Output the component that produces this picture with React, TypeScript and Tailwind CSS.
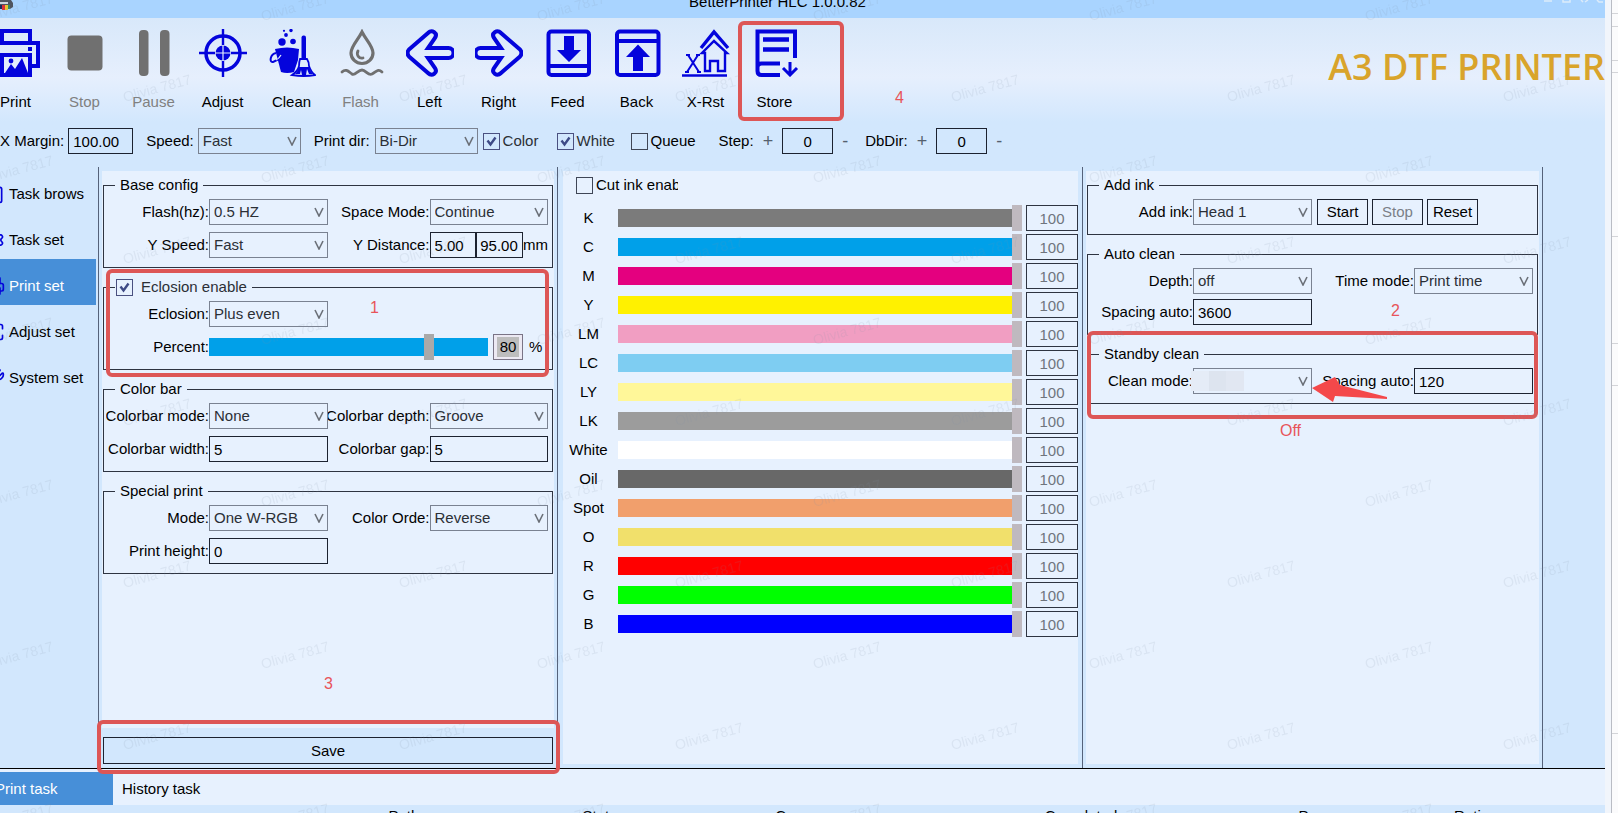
import type { ReactNode } from 'react';
import { Clipboard, Maximize, Printer, Settings, Wrench } from 'lucide-react';

const icons: Record<string, ReactNode> = {
  Print: (
    <g fill="none" stroke="currentColor" strokeWidth="4">
      <path d="M10 13V2h28v11M10 37H2V14h44v23h-8" />
      <rect x="10" y="26" width="28" height="20" />
      <path d="M36 20h4" />
      <path d="M13 44l6-9 4 5 7-11 6 15z" fill="currentColor" stroke="none" />
      <circle cx="19" cy="32" r="2.4" fill="currentColor" stroke="none" />
    </g>
  ),
  Stop: <rect x="6.5" y="6.5" width="35" height="35" rx="4" fill="currentColor" />,
  Pause: (
    <g fill="currentColor">
      <rect x="9" y="1" width="9.5" height="46" rx="4" />
      <rect x="30" y="1" width="9.5" height="46" rx="4" />
    </g>
  ),
  Adjust: (
    <g fill="none" stroke="currentColor">
      <circle cx="24" cy="24" r="17" strokeWidth="3.5" />
      <circle cx="24" cy="24" r="7.5" fill="currentColor" stroke="none" />
      <path d="M24 0v16M24 32v16M0 24h16M32 24h16" strokeWidth="2.4" />
      <path d="M24 16v16M16 24h16" stroke="#e5effd" strokeWidth="1.2" />
    </g>
  ),
  Clean: (
    <g fill="currentColor">
      <path d="M7 20q12-3 24 0l-1 11-4 12q-7 2-13 0z" />
      <path d="M8 24c-6 1-7 10-3 9 3-1 6-3 8-6" fill="none" stroke="currentColor" strokeWidth="2" />
      <path d="M8 31c2-1 4-3 5-5" fill="none" stroke="#e0edfc" strokeWidth="1.2" />
      <circle cx="14" cy="13" r="3.7" />
      <circle cx="25" cy="12.5" r="2.8" />
      <circle cx="18" cy="6" r="1.9" />
      <circle cx="16" cy="1.8" r="1.1" />
      <circle cx="23" cy="1.5" r="1.7" />
      <rect x="33.5" y="6.5" width="4.5" height="24" rx="2" />
      <path d="M32 30h7q2 3 2 7 2 6 6 9-11 2-23 0 6-4 7-9 0-4 1-7z" fill="#e0edfc" stroke="currentColor" strokeWidth="1.8" />
      <path d="M31 38q-1 4-4 7h5l1-4 1 5h4l1-6 2 5h4q-3-3-4-7z" />
    </g>
  ),
  Flash: (
    <g fill="none" stroke="currentColor" strokeLinecap="round">
      <path d="M25 3C21 11 14 17 14 24a11 10.5 0 0 0 22 0C36 17 29 11 25 3z" strokeWidth="3.2" />
      <path d="M21 22c-2 4 1 8 5 7" strokeWidth="2.8" />
      <path d="M5 43c4-4 7 0 10 2s6-4 10-4 6 6 10 4 6-6 10-2" strokeWidth="2.8" />
    </g>
  ),
  Left: (
    <path
      d="M3 20.5L22 4C26 0 32 4 29 9L22 19H42.5a5 5 0 0 1 0 10H22L29 39C32 44 26 48 22 44L3 27.5Q0 24 3 20.5z"
      fill="none"
      stroke="currentColor"
      strokeWidth="4"
    />
  ),
  Right: (
    <path
      d="M45 20.5L26 4C22 0 16 4 19 9L26 19H5.5a5 5 0 0 0 0 10H26L19 39C16 44 22 48 26 44L45 27.5Q48 24 45 20.5z"
      fill="none"
      stroke="currentColor"
      strokeWidth="4"
    />
  ),
  Feed: (
    <g fill="none" stroke="currentColor" strokeWidth="4">
      <rect x="4.5" y="2.5" width="40.5" height="43.5" rx="3" />
      <path d="M5 37h40" />
      <path d="M20 7h10v14h7L25 33 13 21h7z" fill="currentColor" stroke="none" />
    </g>
  ),
  Back: (
    <g fill="none" stroke="currentColor" strokeWidth="4">
      <rect x="4" y="2.5" width="41.5" height="43.5" rx="3" />
      <path d="M4 12h41" />
      <path d="M20 42h10V28h7L25 15.5 13 28h7z" fill="currentColor" stroke="none" />
    </g>
  ),
  'X-Rst': (
    <g fill="none" stroke="currentColor" strokeWidth="2.4">
      <path d="M0 46.5h45" />
      <path d="M6 26l11 17M16 26L5 43M4 26h4M14 26h4M3 43h4M15 43h4" strokeWidth="2" />
      <path d="M19 19L32 3l14 16" strokeWidth="3.4" />
      <path d="M23 42V24h-3l12-12 13 12h-2v18h-7V32h-8v10z" />
    </g>
  ),
  Store: (
    <g fill="none" stroke="currentColor" strokeWidth="4">
      <path d="M44 29V2.5H6.5V38q0-3.500 4-3.500H29M6.5 36v6q0 4 4 4H29" />
      <path d="M12 10.5h26M12 20.5h26" strokeWidth="4.5" />
      <path d="M39 33v13M32 39l7 7 7-7" strokeWidth="3" />
    </g>
  ),
};

const tools = [
  { name: 'Print' },
  { name: 'Stop', off: true },
  { name: 'Pause', off: true },
  { name: 'Adjust' },
  { name: 'Clean' },
  { name: 'Flash', off: true },
  { name: 'Left' },
  { name: 'Right' },
  { name: 'Feed' },
  { name: 'Back' },
  { name: 'X-Rst' },
  { name: 'Store' },
];

const sideItems = [
  { name: 'Task brows', Icon: Clipboard },
  { name: 'Task set', Icon: Settings },
  { name: 'Print set', Icon: Printer, active: true },
  { name: 'Adjust set', Icon: Maximize },
  { name: 'System set', Icon: Wrench },
];

const inks = [
  { name: 'K', track: '[&::-webkit-slider-runnable-track]:bg-[#7b7b7b]' },
  { name: 'C', track: '[&::-webkit-slider-runnable-track]:bg-[#00a0e9]' },
  { name: 'M', track: '[&::-webkit-slider-runnable-track]:bg-[#e4007f]' },
  { name: 'Y', track: '[&::-webkit-slider-runnable-track]:bg-[#fff100]' },
  { name: 'LM', track: '[&::-webkit-slider-runnable-track]:bg-[#f19ec2]' },
  { name: 'LC', track: '[&::-webkit-slider-runnable-track]:bg-[#7ecdf2]' },
  { name: 'LY', track: '[&::-webkit-slider-runnable-track]:bg-[#fff799]' },
  { name: 'LK', track: '[&::-webkit-slider-runnable-track]:bg-[#9c9c9c]' },
  { name: 'White', track: '[&::-webkit-slider-runnable-track]:bg-white' },
  { name: 'Oil', track: '[&::-webkit-slider-runnable-track]:bg-[#686868]' },
  { name: 'Spot', track: '[&::-webkit-slider-runnable-track]:bg-[#f19f6c]' },
  { name: 'O', track: '[&::-webkit-slider-runnable-track]:bg-[#f1e06b]' },
  { name: 'R', track: '[&::-webkit-slider-runnable-track]:bg-[#ff0000]' },
  { name: 'G', track: '[&::-webkit-slider-runnable-track]:bg-[#00ff00]' },
  { name: 'B', track: '[&::-webkit-slider-runnable-track]:bg-[#0000ff]' },
];

const sliderClass =
  'w-full min-w-0 appearance-none bg-transparent h-[26px] [&::-webkit-slider-runnable-track]:h-[18px] [&::-webkit-slider-thumb]:appearance-none [&::-webkit-slider-thumb]:h-[26px] [&::-webkit-slider-thumb]:w-[10px] [&::-webkit-slider-thumb]:-mt-1';

const boxClass = 'h-[26px] min-w-0 border border-[#1c2230] bg-transparent text-black';

const Select = ({ id, value }: { id: string; value: string }) => (
  <div className="relative w-full min-w-0">
    <select
      id={id}
      className="block h-[26px] w-full appearance-none border border-[#7a8291] bg-transparent pl-1 text-[#2b2f36]"
    >
      <option>{value}</option>
    </select>
    <svg viewBox="0 0 10 10" className="pointer-events-none absolute top-2 right-1 size-[10px]">
      <path d="M1 1l4 8 4-8" fill="none" stroke="#6b7078" strokeWidth="1.6" />
    </svg>
  </div>
);

const Check = ({ id, checked = false }: { id: string; checked?: boolean }) => (
  <span className="relative size-[17px] shrink-0">
    <input
      id={id}
      type="checkbox"
      defaultChecked={checked}
      className="peer block size-[17px] appearance-none border border-[#3f4656] checked:border-[#4a5080]"
    />
    <svg viewBox="0 0 17 17" className="pointer-events-none absolute inset-0 hidden peer-checked:block">
      <path d="M4.5 7.5l3 4 5-7" fill="none" stroke="#3e4a86" strokeWidth="2.4" />
    </svg>
  </span>
);

const FieldLabel = ({ id, text }: { id: string; text: string }) => (
  <label htmlFor={id} className="flex justify-end overflow-hidden whitespace-nowrap">
    {text}
  </label>
);

const SelectField = ({ id, label, value }: { id: string; label: string; value: string }) => (
  <>
    <FieldLabel id={id} text={label} />
    <Select id={id} value={value} />
  </>
);

const TextField = ({ id, label, value }: { id: string; label: string; value: string }) => (
  <>
    <FieldLabel id={id} text={label} />
    <input id={id} defaultValue={value} className={`${boxClass} w-full pl-1`} />
  </>
);

const Group = ({ title, children, tight = false }: { title: ReactNode; children: ReactNode; tight?: boolean }) => (
  <fieldset className="relative border border-[#2e3441]">
    <legend className="ml-[11px] flex h-5 items-center">{title}</legend>
    <div
      className={`grid grid-cols-[103px_minmax(0,1fr)_102px_minmax(0,1fr)] items-center pt-1 pr-1 pb-[9px] pl-0.5 ${
        tight ? 'gap-y-[5px]' : 'gap-y-[7px]'
      }`}
    >
      {children}
    </div>
  </fieldset>
);

const Title = ({ text }: { text: string }) => <span className="px-[5px]">{text}</span>;

const Stepper = ({ id, label }: { id: string; label: string }) => (
  <div className="flex items-center">
    <label htmlFor={id}>{label}</label>
    <button aria-label={`${label} up`} className="mx-[9px] text-lg text-[#55606e]">
      +
    </button>
    <input id={id} defaultValue="0" className={`${boxClass} w-[51px] text-center`} />
    <button aria-label={`${label} down`} className="ml-[9px] text-lg text-[#55606e]">
      -
    </button>
  </div>
);

const Mark = ({ className }: { className: string }) => (
  <div className={`pointer-events-none absolute z-10 rounded-md border-4 border-[#dd5656] ${className}`} />
);

const Note = ({ text, className }: { text: string; className: string }) => (
  <span className={`absolute z-10 text-base text-[#e8545a] ${className}`}>{text}</span>
);

const Toolbar = () => (
  <div className="relative bg-linear-to-b from-[#d8e8fa] from-0% via-[#e6effd] via-40% to-[#d2e7fd] to-70% pb-[13px]">
    <div className="flex items-start justify-between">
      <div className="-ml-[19px] flex pt-[11px]">
        {tools.map((tool) => (
          <button
            key={tool.name}
            disabled={tool.off}
            className={`relative flex w-[69px] flex-col items-center gap-[15px] ${
              tool.off ? 'text-[#707070]' : 'text-[#0404dc]'
            }`}
          >
            <svg viewBox="0 0 48 48" className="size-12">
              {icons[tool.name]}
            </svg>
            <span className={tool.off ? 'text-[#808080]' : 'text-black'}>{tool.name}</span>
            {tool.name === 'Store' && <Mark className="-top-2 -left-[2px] h-[100px] w-[106px]" />}
          </button>
        ))}
        <div className="relative">
          <Note text="4" className="top-[57px] left-[86px]" />
        </div>
      </div>
      <h1 className="pt-6 font-['Open_Sans',sans-serif] text-4xl leading-[50px] font-semibold whitespace-nowrap text-[#d9a42b]">
        A3 DTF PRINTER
      </h1>
    </div>
    <div className="mt-4 flex h-[26px] items-center gap-[13px] whitespace-nowrap">
      <div className="flex items-center gap-1">
        <label htmlFor="x-margin">X Margin:</label>
        <input id="x-margin" defaultValue="100.00" className={`${boxClass} w-[65px] pl-1`} />
      </div>
      <div className="flex items-center gap-1">
        <label htmlFor="speed">Speed:</label>
        <div className="w-[103px]">
          <Select id="speed" value="Fast" />
        </div>
      </div>
      <div className="flex items-center gap-[5px]">
        <label htmlFor="print-dir">Print dir:</label>
        <div className="w-[103px]">
          <Select id="print-dir" value="Bi-Dir" />
        </div>
      </div>
      <div className="-ml-2 flex">
        <label htmlFor="color" className="flex w-[74px] items-center gap-[3px] text-[#2b2f36]">
          <Check id="color" checked />
          Color
        </label>
        <label htmlFor="white" className="flex w-[74px] items-center gap-[3px] text-[#2b2f36]">
          <Check id="white" checked />
          White
        </label>
        <label htmlFor="queue" className="flex w-[75px] items-center gap-[3px]">
          <Check id="queue" />
          Queue
        </label>
      </div>
      <div className="flex gap-[17px]">
        <Stepper id="step" label="Step:" />
        <Stepper id="dbdir" label="DbDir:" />
      </div>
    </div>
  </div>
);

const PrintConfig = () => (
  <section className="relative flex min-w-0 flex-col border-l border-[#55627a] px-[3px] pt-1 pb-1">
    <div className="flex flex-1 flex-col gap-[9px] bg-[#e7f1fe] px-px pt-1">
      <Group title={<Title text="Base config" />}>
        <SelectField id="flash" label="Flash(hz):" value="0.5 HZ" />
        <SelectField id="space-mode" label="Space Mode:" value="Continue" />
        <SelectField id="y-speed" label="Y Speed:" value="Fast" />
        <FieldLabel id="y-distance" text="Y Distance:" />
        <div className="flex items-center">
          <input id="y-distance" defaultValue="5.00" className={`${boxClass} w-[47px] pl-1`} />
          <input aria-label="Y Distance end" defaultValue="95.00" className={`${boxClass} w-[47px] pl-[3px]`} />
          <span>mm</span>
        </div>
      </Group>
      <Group
        title={
          <label htmlFor="eclosion-enable" className="flex items-center gap-2 pr-[5px] pl-px text-[#2b2f36]">
            <Check id="eclosion-enable" checked />
            Eclosion enable
          </label>
        }
      >
        <SelectField id="eclosion" label="Eclosion:" value="Plus even" />
        <span className="col-span-2" />
        <FieldLabel id="percent" text="Percent:" />
        <div className="col-span-3 flex items-center">
          <input
            id="percent"
            type="range"
            defaultValue="80"
            className={`${sliderClass} [&::-webkit-slider-runnable-track]:bg-[#00a0e9] [&::-webkit-slider-thumb]:bg-[#a9a9a9]`}
          />
          <div className="ml-[5px] flex h-[26px] w-[30px] shrink-0 items-center justify-center border border-[#7a7486] bg-[#ece9f3]">
            <input aria-label="Percent value" defaultValue="80" className="w-[22px] bg-[#bdbdbd] text-center" />
          </div>
          <span className="w-[25px] shrink-0 pl-[6px]">%</span>
        </div>
        <Mark className="-top-7 right-[3px] -bottom-2 left-0.5" />
        <Note text="1" className="-top-px left-[266px]" />
      </Group>
      <Group title={<Title text="Color bar" />}>
        <SelectField id="bar-mode" label="Colorbar mode:" value="None" />
        <SelectField id="bar-depth" label="Colorbar depth:" value="Groove" />
        <TextField id="bar-width" label="Colorbar width:" value="5" />
        <TextField id="bar-gap" label="Colorbar gap:" value="5" />
      </Group>
      <Group title={<Title text="Special print" />}>
        <SelectField id="special-mode" label="Mode:" value="One W-RGB" />
        <SelectField id="color-order" label="Color Orde:" value="Reverse" />
        <TextField id="print-height" label="Print height:" value="0" />
      </Group>
    </div>
    <button className="mx-px mt-[9px] h-[27px] border border-[#1c2230]">Save</button>
    <Mark className="-right-[3px] -bottom-[6px] -left-0.5 h-[54px]" />
    <Note text="3" className="bottom-[72px] left-[225px]" />
  </section>
);

const InkPanel = () => (
  <section className="flex min-w-0 flex-col border-l border-[#55627a] pt-1 pr-1 pb-1 pl-[5px]">
    <div className="flex-1 bg-[#e7f1fe]">
      <label htmlFor="cut-ink" className="ml-[13px] flex h-[28px] items-center gap-[3px]">
        <Check id="cut-ink" />
        <span className="w-[82px] overflow-hidden whitespace-nowrap">Cut ink enable</span>
      </label>
      <div className="mt-[6px] flex flex-col gap-[3px]">
        {inks.map((ink) => (
          <div key={ink.name} className="flex items-center">
            <label htmlFor={`ink-${ink.name}`} className="w-[55px] shrink-0 pr-1 text-center">
              {ink.name}
            </label>
            <input
              id={`ink-${ink.name}`}
              type="range"
              defaultValue="100"
              className={`${sliderClass} ${ink.track} [&::-webkit-slider-thumb]:bg-[#bfb9bf]`}
            />
            <input
              aria-label={`${ink.name} value`}
              defaultValue="100"
              className="ml-1 h-[26px] w-[52px] shrink-0 border border-[#2e3441] text-center text-[#6f757d]"
            />
          </div>
        ))}
      </div>
    </div>
  </section>
);

const CleanPanel = () => (
  <section className="flex min-w-0 flex-col border-l border-[#55627a] px-[3px] pt-1 pb-1">
    <div className="flex flex-1 flex-col gap-[9px] bg-[#e7f1fe] px-px pt-1">
      <Group title={<Title text="Add ink" />}>
        <SelectField id="add-ink" label="Add ink:" value="Head 1" />
        <div className="col-span-2 flex gap-1 pl-[5px]">
          <button className={`${boxClass} w-[51px]`}>Start</button>
          <button disabled className="h-[26px] w-[51px] border border-[#1c2230] text-[#7a7f87]">
            Stop
          </button>
          <button className={`${boxClass} w-[51px]`}>Reset</button>
        </div>
      </Group>
      <Group title={<Title text="Auto clean" />} tight>
        <SelectField id="depth" label="Depth:" value="off" />
        <SelectField id="time-mode" label="Time mode:" value="Print time" />
        <TextField id="auto-spacing" label="Spacing auto:" value="3600" />
        <Note text="2" className="top-[35px] left-[303px]" />
      </Group>
      <Group title={<Title text="Standby clean" />}>
        <FieldLabel id="clean-mode" text="Clean mode:" />
        <div className="relative">
          <Select id="clean-mode" value="" />
          {/* censored value */}
          <div className="absolute top-[3px] -left-0.5 flex h-5 w-[53px]">
            <span className="flex-1 bg-[#e5ecf7]" />
            <span className="flex-1 bg-[#dde4ef]" />
            <span className="flex-1 bg-[#e1e7f2]" />
          </div>
          <svg viewBox="0 0 76 26" className="absolute top-2 left-full z-10 h-[26px] w-[76px]">
            <path d="M0 12L23 1l5 8 47 12v2l-52-3-2 6z" fill="#f4484a" />
          </svg>
        </div>
        <TextField id="standby-spacing" label="Spacing auto:" value="120" />
        <Mark className="-top-[33px] -right-px -bottom-4 -left-px" />
        <Note text="Off" className="top-[55px] left-[192px]" />
      </Group>
    </div>
  </section>
);

const TaskTabs = () => (
  <footer className="h-[45px] shrink-0 overflow-hidden border-t border-black">
    <div className="flex h-9 bg-[#e7f1fe] pt-[3px]">
      <button className="-ml-[5px] w-[118px] bg-[#478fd8] text-left text-white">Print task</button>
      <button className="px-[9px]">History task</button>
    </div>
    <table className="w-full table-fixed">
      <thead>
        <tr className="text-left [&>th]:pt-px [&>th]:font-normal">
          <td className="w-[24.2%]" />
          <th className="w-[12.1%]">Path</th>
          <th className="w-[12%]">Status</th>
          <th className="w-[16.8%]">Copy</th>
          <th className="w-[15.8%]">Completed</th>
          <th className="w-[9.7%]">Pass</th>
          <th>Ratio</th>
        </tr>
      </thead>
    </table>
  </footer>
);

const Watermark = () => (
  <svg className="pointer-events-none absolute inset-0 z-20 size-full" aria-hidden="true">
    <defs>
      <pattern id="wm" width="276" height="162" patternUnits="userSpaceOnUse" x="-50" y="-34">
        <g fill="#7d8da3" fillOpacity="0.13" fontSize="14" textAnchor="middle">
          <text x="69" y="46" transform="rotate(-15 69 41)">
            Olivia 7817
          </text>
          <text x="207" y="127" transform="rotate(-15 207 122)">
            Olivia 7817
          </text>
        </g>
      </pattern>
    </defs>
    <rect width="100%" height="100%" fill="url(#wm)" />
  </svg>
);

export default function App() {
  return (
    <div className="relative flex h-screen overflow-hidden bg-[#d2e7fd] font-['Liberation_Sans',Arial,sans-serif] text-[15px] leading-5 text-black">
      <div className="flex min-w-0 flex-1 flex-col">
        <header className="flex h-[18px] shrink-0 items-start justify-between overflow-hidden bg-[#a9d4ff]">
          <svg viewBox="0 0 14 12" className="h-3 w-[14px]">
            <path d="M0 0h11l2 3v4l-3 2H0z" fill="#4f5560" />
            <path d="M0 2h8v2H0z" fill="#c9d2dc" />
            <path d="M0 5h2v4H0z" fill="#1d2a5a" />
            <path d="M2 5h3v5H2z" fill="#d8303a" />
            <path d="M5 5h3v5H5z" fill="#e8c22e" />
            <path d="M8 5h2v4H8z" fill="#2d8a5a" />
          </svg>
          <span className="-mt-2">BetterPrinter HLC 1.0.0.82</span>
          <svg viewBox="0 0 64 4" className="h-1 w-16" fill="none" stroke="#dcebfa" strokeWidth="1.5">
            <path d="M3 1h8M22 0v2h7V0M40 0l2 2M44 2l3-2M56 0l2 2h4" />
          </svg>
        </header>
        <Toolbar />
        <main className="grid min-h-0 flex-1 grid-cols-[98px_459fr_525fr_460fr_63px]">
          <nav className="overflow-hidden pr-0.5">
            {sideItems.map(({ name, Icon, active }) => (
              <a
                key={name}
                href="#"
                className={`flex h-[46px] items-center pt-[7px] whitespace-nowrap ${
                  active ? 'bg-[#478fd8] text-white' : ''
                }`}
              >
                <Icon className="-ml-[15px] size-5 shrink-0 text-[#0404dc]" />
                <span className="pl-1">{name}</span>
              </a>
            ))}
          </nav>
          <PrintConfig />
          <InkPanel />
          <CleanPanel />
          <div className="border-l border-[#55627a]" />
        </main>
        <TaskTabs />
      </div>
      {/* edge of the window behind */}
      <svg className="h-full w-[13px] shrink-0">
        <rect width="6" height="100%" fill="#f1f5fb" />
        <rect x="6" width="7" height="100%" fill="#fbfbfc" />
        <path d="M6.5 0V2000" stroke="#b9bcc4" />
        <path d="M7 13.5h6M7 26.5h6M7 60.5h6M7 72.5h6M7 236.5h6M7 343.5h6M7 385.5h6M7 733.5h6" stroke="#d3d4d8" />
      </svg>
      <Watermark />
    </div>
  );
}
